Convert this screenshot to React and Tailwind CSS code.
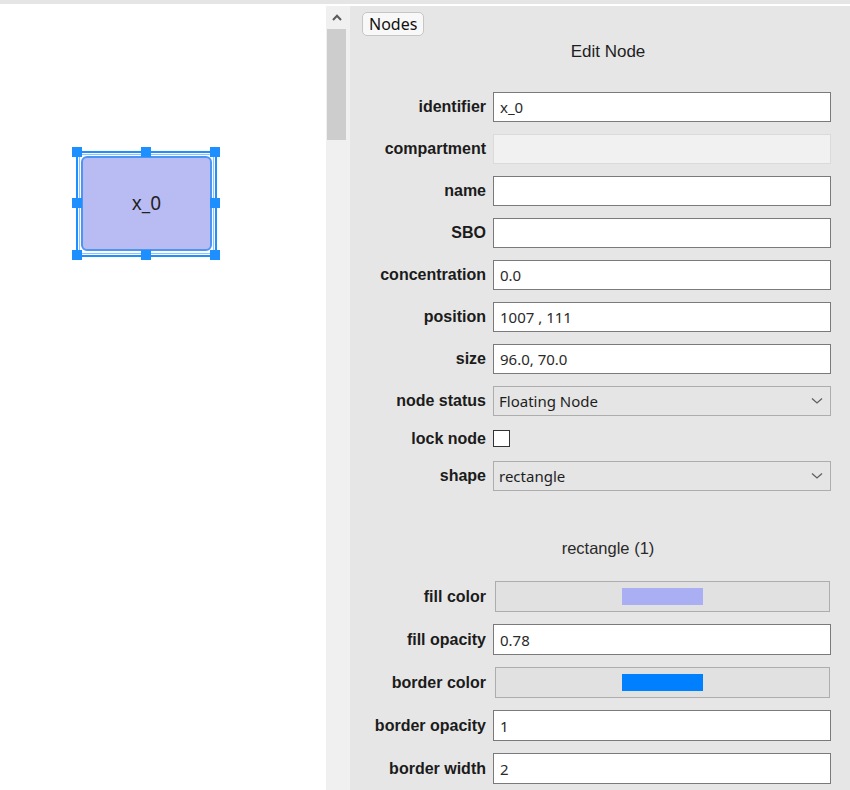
import { useState } from 'react'

// ─── Small pieces ───────────────────────────────────────────────────────────
const labelCls = "text-right text-[16px] font-bold text-[#1b1b1b] leading-none [font-family:'Liberation_Sans',Arial,sans-serif]"
const inputCls = "h-[30px] w-[338px] border border-[#7a7a7a] bg-white pl-[6px] text-[15px] text-[#2a2a2a] outline-none [font-family:'Noto_Sans',sans-serif]"

function Chevron() {
  return (
    <svg width="12" height="8" viewBox="0 0 12 8" className="shrink-0">
      <path d="M1 1.5 L6 6 L11 1.5" fill="none" stroke="#606060" strokeWidth="1.3" />
    </svg>
  )
}

function Select({ value }) {
  return (
    <div className="flex h-[30px] w-[338px] items-center justify-between border border-[#adadad] bg-[#e5e5e5] pl-[5px] pr-[7px] text-[15px] text-[#1e1e1e] [font-family:'Noto_Sans',sans-serif]">
      <span>{value}</span>
      <Chevron />
    </div>
  )
}

function ColorField({ color }) {
  return (
    <div className="ml-[2px] flex h-[31px] w-[335px] items-center justify-center border border-[#adadad] bg-[#e1e1e1]">
      <div className="h-[17px] w-[81px]" style={{ background: color }} />
    </div>
  )
}

function Row({ label, children }) {
  return (
    <>
      <div className={labelCls}>{label}</div>
      <div className="flex items-center">{children}</div>
    </>
  )
}

// ─── Canvas node ────────────────────────────────────────────────────────────
function Handle({ x, y }) {
  return <div className="absolute h-[10px] w-[10px] bg-[#1e8fff]" style={{ left: x - 5, top: y - 5 }} />
}

function Canvas() {
  const handles = [
    [77, 146], [146, 146], [215, 146],
    [77, 197], [215, 197],
    [77, 249], [146, 249], [215, 249],
  ]
  return (
    <div className="relative w-[326px] shrink-0 bg-white">
      {/* selection frame */}
      <div className="absolute left-[76px] top-[145px] h-[106px] w-[141px] border-2 border-[#1e8fff] p-[1px]">
        <div className="h-full w-full border border-[#8cc4ff]" />
      </div>
      {/* node */}
      <div className="absolute left-[81px] top-[150px] flex h-[95px] w-[131px] items-center justify-center rounded-[6px] border-2 border-[#4d95f2] bg-[#b9bcf3] text-[19px] text-[#222] [font-family:'Noto_Sans',sans-serif]">
        x_0
      </div>
      {handles.map(([x, y], i) => <Handle key={i} x={x} y={y} />)}
    </div>
  )
}

// ─── Scrollbar ──────────────────────────────────────────────────────────────
function Scrollbar() {
  return (
    <div className="flex w-[24px] shrink-0 flex-col bg-[#f0f0f0]">
      <div className="flex h-[23px] w-[20px] items-center justify-center pl-[1px]">
        <svg width="10" height="7" viewBox="0 0 10 7">
          <path d="M1 6 L5 1.8 L9 6" fill="none" stroke="#5a5a5a" strokeWidth="2" />
        </svg>
      </div>
      <div className="ml-[1px] h-[111px] w-[19px] bg-[#cdcdcd]" />
    </div>
  )
}

// ─── Edit panel ─────────────────────────────────────────────────────────────
function Panel() {
  const [locked, setLocked] = useState(false)
  return (
    <div className="flex-1 bg-[#e6e6e6] pt-[6px]">
      <div className="pl-[12px]">
        <button className="h-[24px] rounded-[5px] border border-[#c6c6c6] bg-[#f8f8f8] px-[6px] text-[16px] leading-none text-[#111] [font-family:'Noto_Sans',sans-serif]">
          Nodes
        </button>
      </div>
      <div className="mt-[6px] w-[516px] text-center text-[17px] leading-[20px] text-[#1e1e1e] [font-family:'Liberation_Sans',Arial,sans-serif]">
        Edit Node
      </div>

      <div className="mt-[30px] grid grid-cols-[136px_338px] items-center gap-x-[7px] gap-y-[12px]">
        <Row label="identifier"><input className={inputCls} defaultValue="x_0" /></Row>
        <Row label="compartment">
          <div className="h-[30px] w-[338px] border border-[#dadada] bg-[#f1f1f1]" />
        </Row>
        <Row label="name"><input className={inputCls} defaultValue="" /></Row>
        <Row label="SBO"><input className={inputCls} defaultValue="" /></Row>
        <Row label="concentration"><input className={inputCls} defaultValue="0.0" /></Row>
        <Row label="position"><input className={inputCls} defaultValue="1007 , 111" /></Row>
        <Row label="size"><input className={inputCls} defaultValue="96.0, 70.0" /></Row>
        <Row label="node status"><Select value="Floating Node" /></Row>
        <Row label="lock node">
          <div className="flex h-[21px] items-center">
            <button
              onClick={() => setLocked(!locked)}
              className="h-[17px] w-[17px] border border-[#333] bg-white"
            />
          </div>
        </Row>
        <Row label="shape"><Select value="rectangle" /></Row>
      </div>

      <div className="mt-[48px] w-[516px] text-center text-[16.5px] leading-[18px] text-[#2a2a2a] [font-family:'Liberation_Sans',Arial,sans-serif]">
        rectangle (1)
      </div>

      <div className="mt-[24px] grid grid-cols-[136px_338px] items-center gap-x-[7px] gap-y-[12px]">
        <Row label="fill color"><ColorField color="#aaaef2" /></Row>
        <Row label="fill opacity"><input className={inputCls + ' h-[31px]'} defaultValue="0.78" /></Row>
        <Row label="border color"><ColorField color="#0080ff" /></Row>
        <Row label="border opacity"><input className={inputCls + ' h-[31px]'} defaultValue="1" /></Row>
        <Row label="border width"><input className={inputCls + ' h-[31px]'} defaultValue="2" /></Row>
      </div>
    </div>
  )
}

export default function App() {
  return (
    <div className="flex h-[790px] w-[850px] flex-col overflow-hidden bg-white">
      <div className="h-[4px] shrink-0 bg-[#e5e5e5]" />
      <div className="h-[2px] shrink-0 bg-white" />
      <div className="flex min-h-0 flex-1">
        <Canvas />
        <Scrollbar />
        <Panel />
      </div>
    </div>
  )
}
